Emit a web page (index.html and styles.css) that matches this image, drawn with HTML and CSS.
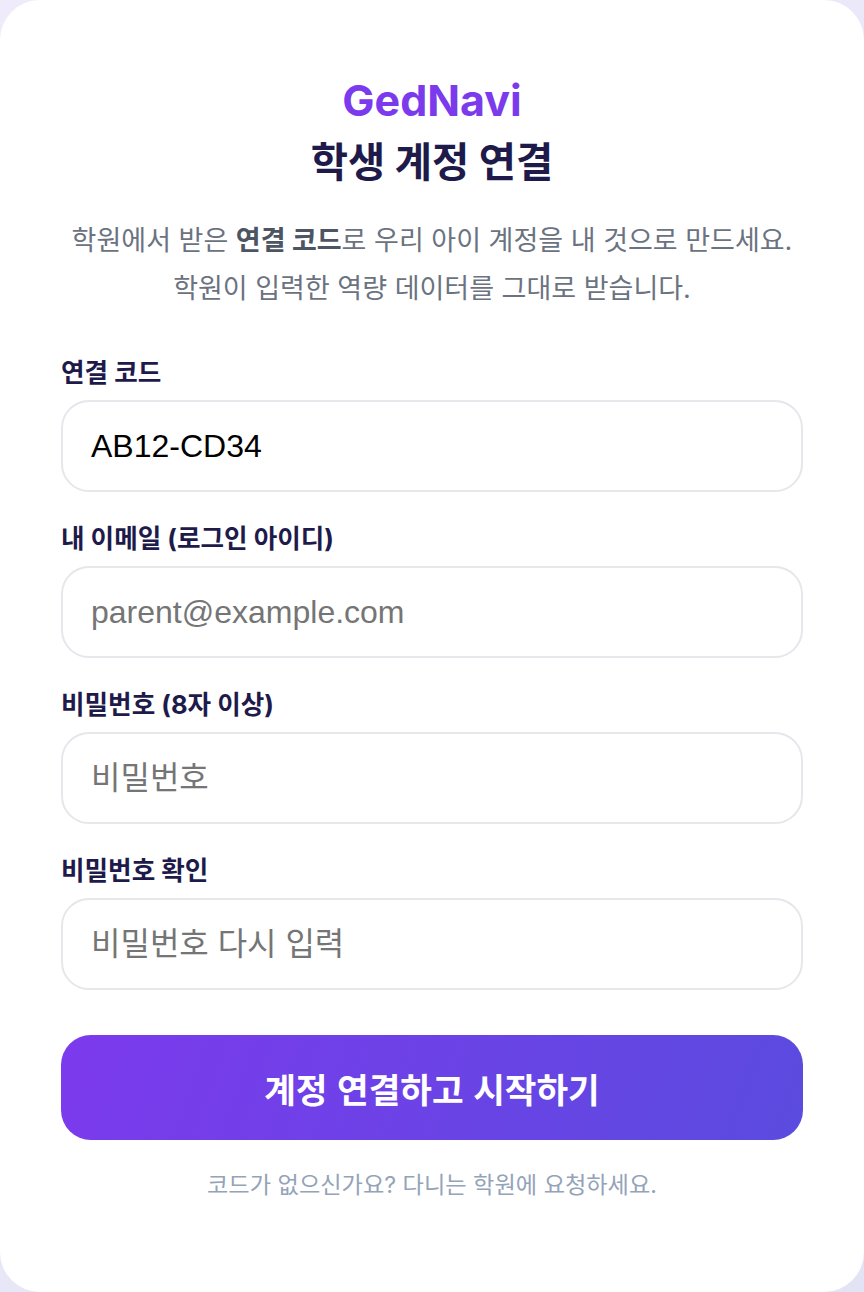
FILE: index.html
```html
<!DOCTYPE html>
<html lang="ko">
<head>
  <meta charset="UTF-8" />
  <meta name="viewport" content="width=device-width, initial-scale=1.0" />
  <title>GedNavi - 학생 계정 연결</title>
  <link rel="stylesheet" href="styles.css">
</head>
<body>
  <div class="card">
    <!-- Header -->
    <div class="brand">GedNavi</div>
    <h1 class="title">학생 계정 연결</h1>
    <p class="subtitle">
      학원에서 받은 <strong>연결 코드</strong>로 우리 아이 계정을 내 것으로 만드세요.<br>
      학원이 입력한 역량 데이터를 그대로 받습니다.
    </p>

    <!-- Form -->
    <form class="form" onsubmit="return false;">
      <div class="field">
        <label for="code">연결 코드</label>
        <input id="code" type="text" value="AB12-CD34">
      </div>
      <div class="field">
        <label for="email">내 이메일 (로그인 아이디)</label>
        <input id="email" type="email" placeholder="parent@example.com">
      </div>
      <div class="field">
        <label for="pw">비밀번호 (8자 이상)</label>
        <input id="pw" type="password" placeholder="비밀번호">
      </div>
      <div class="field">
        <label for="pw2">비밀번호 확인</label>
        <input id="pw2" type="password" placeholder="비밀번호 다시 입력">
      </div>
      <button type="submit" class="submit">계정 연결하고 시작하기</button>
    </form>

    <p class="note">코드가 없으신가요? 다니는 학원에 요청하세요.</p>
  </div>
</body>
</html>
```

FILE: styles.css
```css
* { margin: 0; padding: 0; box-sizing: border-box; }
html, body {
  width: 100%;
  min-height: 100%;
}
body {
  background: linear-gradient(135deg, #efebfb 0%, #e2e4f6 100%);
  font-family: Inter, "Noto Sans CJK KR", sans-serif;
}
.card {
  min-height: 1292px;
  background: #fff;
  border-radius: 40px;
  padding: 70px 61px 60px;
  text-align: center;
}
.brand {
  font-size: 43px;
  line-height: 60px;
  font-weight: 700;
  color: #7c3aed;
}
.title {
  margin-top: 8px;
  font-size: 40.5px;
  line-height: 50px;
  font-weight: 700;
  color: #1e1b4b;
}
.subtitle {
  margin-top: 29px;
  font-size: 27px;
  line-height: 48px;
  color: #6b7280;
}
.subtitle strong {
  color: #4b5563;
  font-weight: 700;
}
.form {
  margin-top: 44px;
  text-align: left;
}
.field { margin-bottom: 31px; }
.field label {
  display: block;
  font-size: 25.6px;
  line-height: 32px;
  font-weight: 700;
  color: #1e1b4b;
  margin-bottom: 11px;
}
.field input {
  display: block;
  width: 100%;
  height: 92px;
  padding: 0 28px;
  border: 2px solid #e5e7eb;
  border-radius: 28px;
  background: #fff;
  font-family: "Liberation Sans", "Noto Sans CJK KR", sans-serif;
  font-size: 32px;
  color: #000;
  outline: none;
}
.field input::placeholder { color: #757575; }
.submit {
  display: block;
  width: 100%;
  height: 105px;
  margin-top: 45px;
  border: none;
  border-radius: 30px;
  background: linear-gradient(110deg, #7c3aed 0%, #5b4bdf 100%);
  color: #fff;
  font-family: "Liberation Sans", "Noto Sans CJK KR", sans-serif;
  font-size: 34.4px;
  font-weight: 700;
  cursor: pointer;
}
.note {
  margin-top: 29px;
  font-size: 23.2px;
  line-height: 32px;
  color: #94a3b8;
}
```
